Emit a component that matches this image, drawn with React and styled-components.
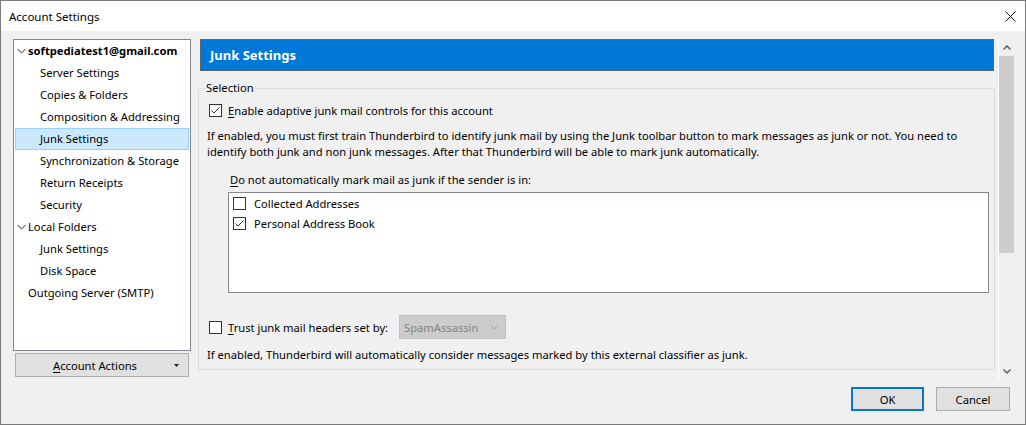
import React from "react";
import styled, { createGlobalStyle } from "styled-components";

const GlobalStyle = createGlobalStyle`
  html, body {
    margin: 0;
    padding: 0;
    background: #f0f0f0;
  }
  body {
    font-family: "Noto Sans", "Open Sans", sans-serif;
    font-size: 11.2px;
    color: #000;
  }
  * {
    box-sizing: border-box;
  }
`;

const Window = styled.div`
  width: 1026px;
  height: 425px;
  border: 1px solid #7a7a7a;
  background: #f0f0f0;
  display: flex;
  flex-direction: column;
  overflow: hidden;
`;

const TitleBar = styled.div`
  height: 30px;
  flex: none;
  background: #fff;
  display: flex;
  align-items: center;
  justify-content: space-between;
  padding: 0 9px 0 8px;
`;

const Title = styled.span`
  font-size: 11.5px;
`;

const Body = styled.div`
  display: flex;
  gap: 7px;
  padding: 8px 10px 0 12px;
  height: 349px;
  flex: none;
`;

const Sidebar = styled.div`
  width: 178px;
  flex: none;
  display: flex;
  flex-direction: column;
`;

const TreeBox = styled.div`
  height: 312px;
  background: #fff;
  border: 1px solid #828790;
`;

const TreeRow = styled.div`
  height: 22px;
  margin: 0 1px;
  display: flex;
  align-items: center;
  white-space: nowrap;
  border: 1px solid ${(p) => (p.$selected ? "#99d1ff" : "transparent")};
  background: ${(p) => (p.$selected ? "#cce8ff" : "transparent")};
  font-weight: ${(p) => (p.$bold ? 700 : 400)};
  padding-bottom: 1px;
`;

const Indent = styled.span`
  width: ${(p) => p.$width}px;
  flex: none;
  display: flex;
  align-items: center;
  padding-left: 1px;
`;

const ActionsButton = styled.div`
  margin: 2px 2px 0;
  height: 24px;
  border: 1px solid #adadad;
  background: #e1e1e1;
  display: flex;
  align-items: center;
`;

const ButtonText = styled.span`
  flex: 1;
  text-align: center;
`;

const DropArrow = styled.span`
  width: 14px;
  display: flex;
  align-items: center;
`;

const Main = styled.div`
  flex: 1;
  min-width: 0;
  display: flex;
  height: 341px;
`;

const Content = styled.div`
  flex: 1;
  min-width: 0;
  display: flex;
  flex-direction: column;
`;

const Header = styled.div`
  height: 32px;
  margin: 0 4px 0 2px;
  background: #0078d7;
  border: 1px solid #5a6673;
  color: #fff;
  font-weight: 700;
  font-size: 13px;
  display: flex;
  align-items: center;
  padding-left: 9px;
`;

const Group = styled.fieldset`
  margin: 9px 3px 0 0;
  padding: 0 8px 6px 8px;
  border: 1px solid #dcdcdc;
  min-width: 0;
`;

const Legend = styled.legend`
  padding: 0 1px;
  margin-left: -2px;
  line-height: 16px;
`;

const CheckRow = styled.div`
  display: flex;
  align-items: center;
  gap: 6px;
  height: ${(p) => p.$height || 16}px;
  margin: ${(p) => p.$margin || "0"};
  white-space: nowrap;
`;

const Text = styled.p`
  margin: ${(p) => p.$margin || "0"};
  line-height: 16px;
  white-space: nowrap;
`;

const Mnemonic = styled.span`
  text-decoration: underline;
  text-underline-offset: 2px;
`;

const ListBox = styled.div`
  width: 761px;
  height: 101px;
  margin: 4px 0 0 21px;
  background: #fff;
  border: 1px solid #828790;
  padding: 0 0 0 4px;
`;

const ListItem = styled.div`
  height: 20px;
  display: flex;
  align-items: center;
  gap: 8px;
`;

const Label = styled.span`
  width: ${(p) => p.$width}px;
  flex: none;
`;

const Select = styled.div`
  width: 107px;
  height: 24px;
  margin-left: -6px;
  background: #cccccc;
  border: 1px solid #bfbfbf;
  color: #838383;
  display: flex;
  align-items: center;
  justify-content: space-between;
  padding: 0 7px 0 4px;
`;

const Scrollbar = styled.div`
  width: 17px;
  flex: none;
  border-left: 1px solid #fff;
  background: #f0f0f0;
  display: flex;
  flex-direction: column;
`;

const ArrowCell = styled.div`
  height: 17px;
  display: flex;
  align-items: center;
  justify-content: center;
`;

const Thumb = styled.div`
  height: 197px;
  margin-right: 1px;
  background: #cdcdcd;
`;

const Track = styled.div`
  flex: 1;
`;

const Footer = styled.div`
  display: flex;
  justify-content: flex-end;
  gap: 12px;
  padding: 7px 15px 0 0;
`;

const DialogButton = styled.div`
  width: ${(p) => p.$width}px;
  height: 24px;
  background: #e1e1e1;
  border: ${(p) => (p.$default ? "2px solid #0078d7" : "1px solid #adadad")};
  display: flex;
  align-items: center;
  justify-content: center;
`;

function CheckBox({ checked }) {
  return (
    <svg width="13" height="13" viewBox="0 0 13 13" style={{ flex: "none" }}>
      <rect x="0.5" y="0.5" width="12" height="12" fill="#fff" stroke="#333" />
      {checked && (
        <path d="M2.5 6.5 L5 9 L10.5 3.5" fill="none" stroke="#333" strokeWidth="1" />
      )}
    </svg>
  );
}

function Chevron() {
  return (
    <svg width="9" height="6" viewBox="0 0 9 6">
      <path d="M0.5 1 L4.5 5 L8.5 1" fill="none" stroke="#808080" strokeWidth="1.2" />
    </svg>
  );
}

const tree = [
  { label: "softpediatest1@gmail.com", level: 0, bold: true, open: true },
  { label: "Server Settings", level: 1 },
  { label: "Copies & Folders", level: 1 },
  { label: "Composition & Addressing", level: 1 },
  { label: "Junk Settings", level: 1, selected: true },
  { label: "Synchronization & Storage", level: 1 },
  { label: "Return Receipts", level: 1 },
  { label: "Security", level: 1 },
  { label: "Local Folders", level: 0, open: true },
  { label: "Junk Settings", level: 1 },
  { label: "Disk Space", level: 1 },
  { label: "Outgoing Server (SMTP)", level: 0 },
];

export default function App() {
  return (
    <>
      <GlobalStyle />
      <Window>
        <TitleBar>
          <Title>Account Settings</Title>
          <svg width="11" height="11" viewBox="0 0 11 11">
            <path d="M0.5 0.5 L10.5 10.5 M10.5 0.5 L0.5 10.5" stroke="#111" strokeWidth="1" />
          </svg>
        </TitleBar>
        <Body>
          <Sidebar>
            <TreeBox>
              {tree.map((item, i) => (
                <TreeRow key={i} $selected={item.selected} $bold={item.bold}>
                  <Indent $width={item.level === 0 ? 12 : 24}>
                    {item.open && <Chevron />}
                  </Indent>
                  {item.label}
                </TreeRow>
              ))}
            </TreeBox>
            <ActionsButton>
              <ButtonText>
                <Mnemonic>A</Mnemonic>ccount Actions
              </ButtonText>
              <DropArrow>
                <svg width="5" height="3" viewBox="0 0 5 3">
                  <path d="M0 0 H5 L2.5 3 Z" fill="#222" />
                </svg>
              </DropArrow>
            </ActionsButton>
          </Sidebar>
          <Main>
            <Content>
              <Header>Junk Settings</Header>
              <Group>
                <Legend>Selection</Legend>
                <CheckRow $margin="6px 0 0 2px">
                  <CheckBox checked />
                  <span>
                    <Mnemonic>E</Mnemonic>nable adaptive junk mail controls for this account
                  </span>
                </CheckRow>
                <Text $margin="10px 0 0">
                  If enabled, you must first train Thunderbird to identify junk mail by using the Junk toolbar button to mark messages as junk or not. You need to
                  <br />
                  identify both junk and non junk messages. After that Thunderbird will be able to mark junk automatically.
                </Text>
                <Text $margin="12px 0 0 23px">
                  <Mnemonic>D</Mnemonic>o not automatically mark mail as junk if the sender is in:
                </Text>
                <ListBox>
                  <ListItem>
                    <CheckBox />
                    <span>Collected Addresses</span>
                  </ListItem>
                  <ListItem>
                    <CheckBox checked />
                    <span>Personal Address Book</span>
                  </ListItem>
                </ListBox>
                <CheckRow $height={24} $margin="22px 0 0 2px">
                  <CheckBox />
                  <Label $width={171}>
                    <Mnemonic>T</Mnemonic>rust junk mail headers set by:
                  </Label>
                  <Select>
                    <span>SpamAssassin</span>
                    <svg width="8" height="5" viewBox="0 0 8 5">
                      <path d="M0.5 0.5 L4 4 L7.5 0.5" fill="none" stroke="#a6a6a6" />
                    </svg>
                  </Select>
                </CheckRow>
                <Text $margin="8px 0 0">
                  If enabled, Thunderbird will automatically consider messages marked by this external classifier as junk.
                </Text>
              </Group>
            </Content>
            <Scrollbar>
              <ArrowCell>
                <svg width="8" height="5" viewBox="0 0 8 5">
                  <path d="M0.5 4.5 L4 1 L7.5 4.5" fill="none" stroke="#606060" strokeWidth="1.5" />
                </svg>
              </ArrowCell>
              <Thumb />
              <Track />
              <ArrowCell>
                <svg width="8" height="5" viewBox="0 0 8 5">
                  <path d="M0.5 0.5 L4 4 L7.5 0.5" fill="none" stroke="#606060" strokeWidth="1.5" />
                </svg>
              </ArrowCell>
            </Scrollbar>
          </Main>
        </Body>
        <Footer>
          <DialogButton $width={73} $default>
            OK
          </DialogButton>
          <DialogButton $width={74}>Cancel</DialogButton>
        </Footer>
      </Window>
    </>
  );
}
